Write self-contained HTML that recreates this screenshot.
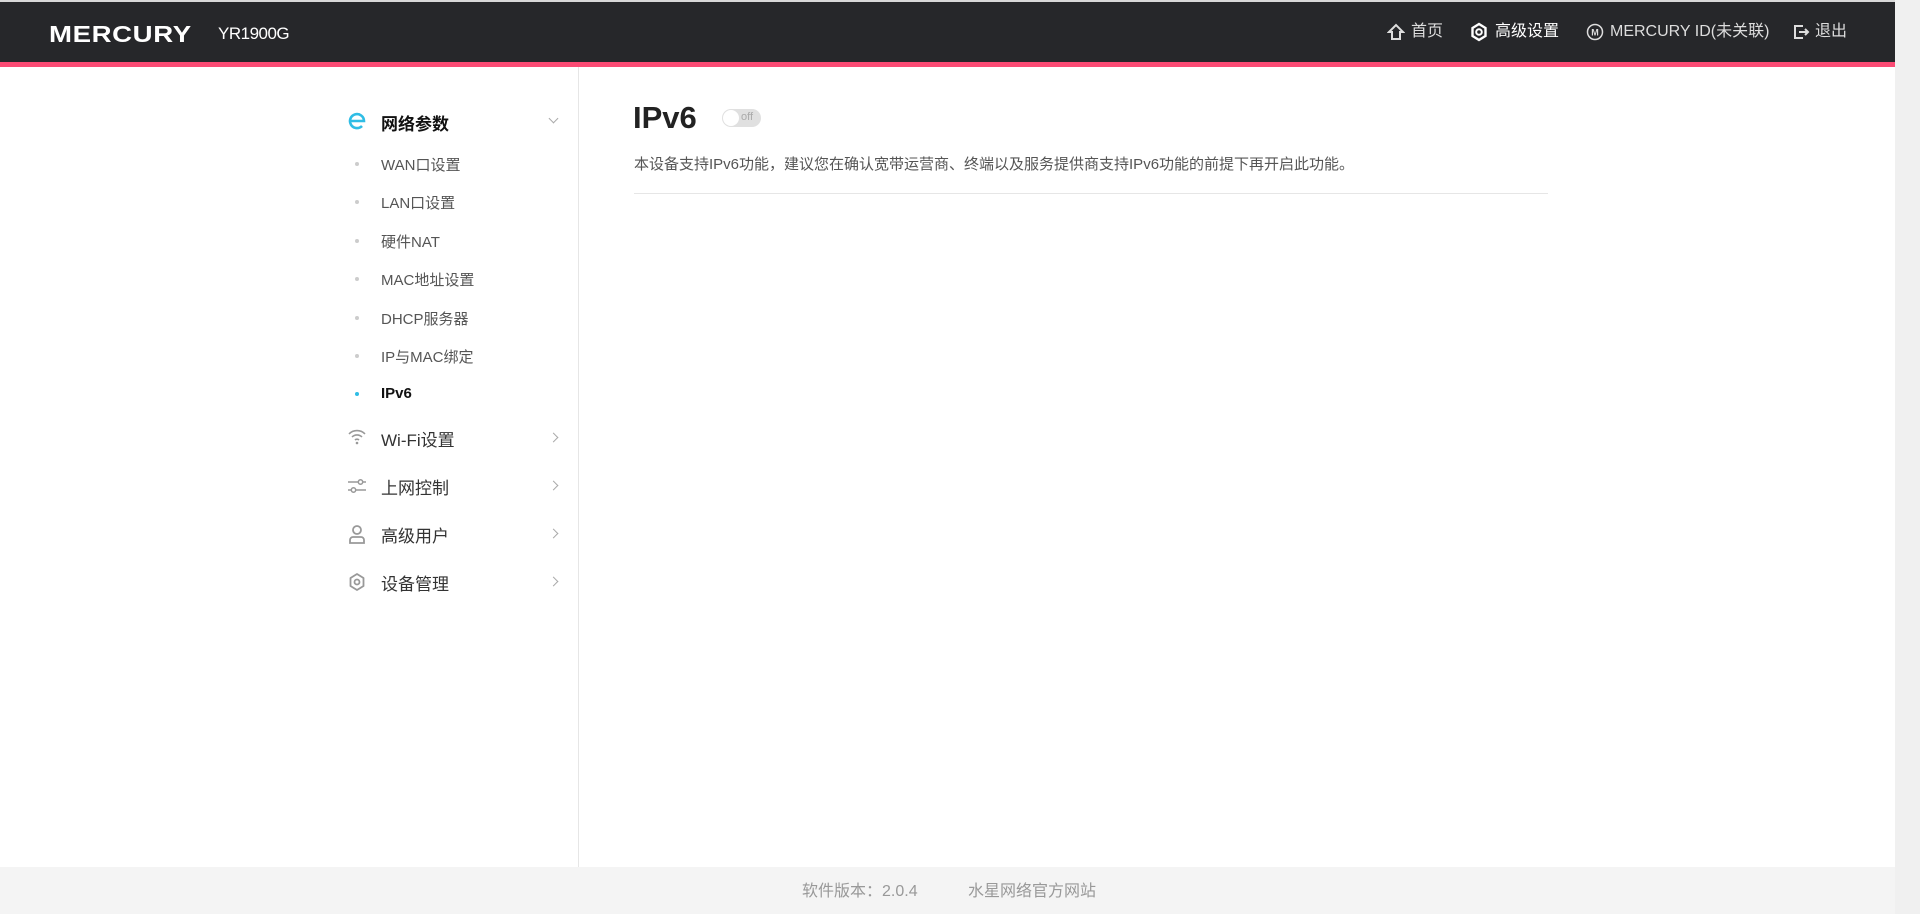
<!DOCTYPE html>
<html><head><meta charset="utf-8"><style>
*{margin:0;padding:0;box-sizing:border-box}
body{width:1920px;height:914px;overflow:hidden;background:#fff;font-family:"Liberation Sans","Noto Sans CJK SC",sans-serif;position:relative}
.hdr{position:absolute;left:0;top:0;width:1895px;height:62px;background:#26272a;border-top:2px solid #d8d8d8}
.pink{position:absolute;left:0;top:62px;width:1895px;height:5px;background:#fb4b74}
.logo{position:absolute;left:49px;top:21px;color:#fff;font-weight:bold;font-size:23px;letter-spacing:0.5px;transform:scaleX(1.2);transform-origin:left}
.model{position:absolute;left:218px;top:24px;color:#fff;font-size:17px;letter-spacing:-0.5px}
.nav{position:absolute;top:22px;color:#ddd;font-size:16px;line-height:20px;display:flex;align-items:center;white-space:nowrap}
.sb{position:absolute;left:1895px;top:0;width:25px;height:914px;background:#f0f0f0}
.side{position:absolute;left:578px;top:67px;width:1px;height:800px;background:#e6e6e6}
.grp{position:absolute;left:381px;font-size:17px;color:#333}
.sub{position:absolute;left:381px;font-size:15px;color:#555}
.dot{position:absolute;left:355px;width:4px;height:4px;border-radius:50%;background:#ccc}
.chev{position:absolute;left:550px;width:7px;height:7px;border-right:1.3px solid #aaa;border-bottom:1.3px solid #aaa}
.ft{position:absolute;left:0;top:867px;width:1895px;height:47px;background:#f4f4f4;color:#999;font-size:16px}
</style></head><body>
<div class="hdr"></div><div class="pink"></div>
<div class="logo">MERCURY</div><div class="model">YR1900G</div>
<svg style="position:absolute;left:1387px;top:23px" width="18" height="18" viewBox="0 0 18 18"><path d="M2 9L9 2l7 7h-3v7H5V9z" fill="none" stroke="#ddd" stroke-width="2"/></svg><div class="nav" style="left:1411px">首页</div>
<svg style="position:absolute;left:1469px;top:22px" width="20" height="20" viewBox="0 0 20 20"><path d="M10 2l6.5 4v8L10 18l-6.5-4V6z" fill="none" stroke="#fff" stroke-width="2.4"/><circle cx="10" cy="10" r="2.8" fill="none" stroke="#fff" stroke-width="2"/></svg><div class="nav" style="left:1495px;color:#fff">高级设置</div>
<svg style="position:absolute;left:1586px;top:23px" width="18" height="18" viewBox="0 0 18 18"><circle cx="9" cy="9" r="7.5" fill="none" stroke="#ddd" stroke-width="1.5"/><text x="9" y="12.5" font-size="9" font-weight="bold" fill="#ddd" text-anchor="middle" font-family="Liberation Sans">M</text></svg><div class="nav" style="left:1610px">MERCURY ID(未关联)</div>
<svg style="position:absolute;left:1792px;top:23px" width="18" height="18" viewBox="0 0 18 18"><path d="M11 3H3v12h8M7 9h9M13 6l3 3-3 3" fill="none" stroke="#ddd" stroke-width="2"/></svg><div class="nav" style="left:1815px">退出</div>
<div class="sb"></div>
<div class="side"></div>
<svg style="position:absolute;left:347px;top:111px" width="20" height="20" viewBox="0 0 20 20"><path d="M3 10h14a7 7 0 1 0-2 5" fill="none" stroke="#2fbde5" stroke-width="2.6"/></svg>
<div class="grp" style="top:110px;font-weight:bold;color:#111">网络参数</div>
<div class="chev" style="top:115px;transform:rotate(45deg)"></div>
<div class="dot" style="top:162px"></div><div class="sub" style="top:154px">WAN口设置</div>
<div class="dot" style="top:200px"></div><div class="sub" style="top:192px">LAN口设置</div>
<div class="dot" style="top:239px"></div><div class="sub" style="top:231px">硬件NAT</div>
<div class="dot" style="top:277px"></div><div class="sub" style="top:269px">MAC地址设置</div>
<div class="dot" style="top:316px"></div><div class="sub" style="top:308px">DHCP服务器</div>
<div class="dot" style="top:354px"></div><div class="sub" style="top:346px">IP与MAC绑定</div>
<div class="dot" style="top:392px;background:#2fbde5"></div><div class="sub" style="top:385px;font-weight:bold;color:#111">IPv6</div>
<svg style="position:absolute;left:347px;top:428px" width="20" height="18" viewBox="0 0 20 18"><path d="M2 6a11 11 0 0 1 16 0M5 9a7 7 0 0 1 10 0M8 12a3 3 0 0 1 4 0" fill="none" stroke="#999" stroke-width="1.6"/><circle cx="10" cy="15" r="1.3" fill="#999"/></svg>
<div class="grp" style="top:426px">Wi-Fi设置</div><div class="chev" style="top:434px;transform:rotate(-45deg)"></div>
<svg style="position:absolute;left:347px;top:477px" width="20" height="18" viewBox="0 0 20 18"><path d="M1 5h10M16 5h3M1 13h3M9 13h10" stroke="#999" stroke-width="1.6"/><circle cx="13.5" cy="5" r="2.2" fill="none" stroke="#999" stroke-width="1.5"/><circle cx="6.5" cy="13" r="2.2" fill="none" stroke="#999" stroke-width="1.5"/></svg>
<div class="grp" style="top:474px">上网控制</div><div class="chev" style="top:482px;transform:rotate(-45deg)"></div>
<svg style="position:absolute;left:347px;top:524px" width="20" height="20" viewBox="0 0 20 20"><circle cx="10" cy="6" r="4" fill="none" stroke="#999" stroke-width="1.8"/><path d="M3 19v-3a3 3 0 0 1 3-3h8a3 3 0 0 1 3 3v3z" fill="none" stroke="#999" stroke-width="1.8"/></svg>
<div class="grp" style="top:522px">高级用户</div><div class="chev" style="top:530px;transform:rotate(-45deg)"></div>
<svg style="position:absolute;left:347px;top:572px" width="20" height="20" viewBox="0 0 20 20"><path d="M10 2l6.5 4v8L10 18l-6.5-4V6z" fill="none" stroke="#999" stroke-width="1.8" stroke-linejoin="round"/><circle cx="10" cy="10" r="2.5" fill="none" stroke="#999" stroke-width="1.8"/></svg>
<div class="grp" style="top:570px">设备管理</div><div class="chev" style="top:578px;transform:rotate(-45deg)"></div>
<div style="position:absolute;left:633px;top:100px;font-size:31px;font-weight:bold;color:#222">IPv6</div>
<div style="position:absolute;left:722px;top:109px;width:39px;height:18px;border-radius:9px;background:#e0e0e0"><div style="position:absolute;left:1px;top:1px;width:16px;height:16px;border-radius:50%;background:#fff"></div><span style="position:absolute;left:19px;top:2px;font-size:11px;color:#aaa">off</span></div>
<div style="position:absolute;left:634px;top:153px;font-size:15px;color:#555">本设备支持IPv6功能，建议您在确认宽带运营商、终端以及服务提供商支持IPv6功能的前提下再开启此功能。</div>
<div style="position:absolute;left:634px;top:193px;width:914px;height:1px;background:#e6e6e6"></div>
<div class="ft"><span style="position:absolute;left:802px;top:10px">软件版本：2.0.4</span><span style="position:absolute;left:968px;top:10px">水星网络官方网站</span></div>
</body></html>
